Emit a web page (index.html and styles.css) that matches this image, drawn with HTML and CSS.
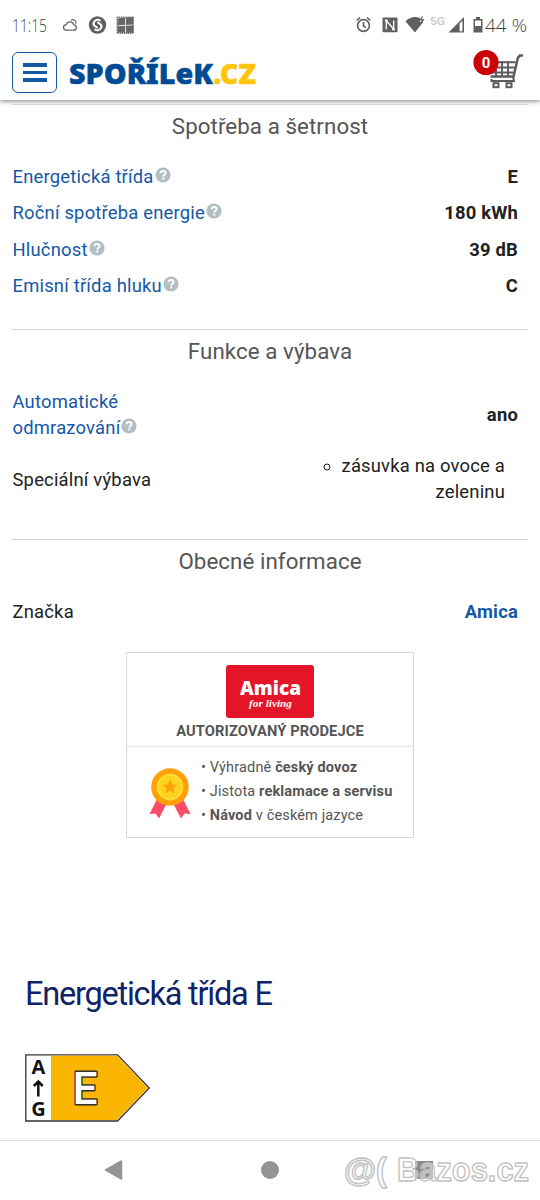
FILE: index.html
```
<!DOCTYPE html>
<html lang="cs">
<head>
<meta charset="utf-8">
<title>Spořílek.cz</title>
<link rel="stylesheet" href="styles.css">
</head>
<body>
<svg class="defs" width="0" height="0" aria-hidden="true">
  <symbol id="help" viewBox="0 0 16 16">
    <circle cx="8" cy="8" r="7.600" fill="#b3bec3"/>
    <path d="M5.500 6.300C5.600 4.700 6.700 4 8.100 4c1.500 0 2.500.8 2.500 2.100 0 1.800-2.300 1.700-2.300 3.300" fill="none" stroke="#fff" stroke-width="1.900"/>
    <rect x="7.200" y="10.500" width="2.100" height="2" fill="#fff"/>
  </symbol>
</svg>
<header class="top">
  <div class="status">
    <svg class="status-svg" width="540" height="48" viewBox="0 0 540 48">
      <text class="clock" x="12" y="32" textLength="35" lengthAdjust="spacingAndGlyphs">11:15</text>
      <g fill="none" stroke="#666" stroke-width="1.300">
        <path d="M66.500 30.200h7a2.700 2.700 0 0 0 .3-5.400a4 4 0 0 0-7.600-.2a2.800 2.800 0 0 0 .3 5.600z"/>
        <path d="M71 20.200a3.200 3.200 0 0 1 4.800 3.600"/>
      </g>
      <circle cx="97.500" cy="25" r="8.700" fill="#606060"/>
      <path d="M99.800 20.500c-2-1.700-4.300-.5-5.600 1.100c-1.200 1.600-.8 3.200.7 4.400l2.200 1.500M95.200 29.500c2 1.700 4.300.5 5.600-1.100c1.200-1.600.8-3.200-.7-4.400l-2.200-1.500" fill="none" stroke="#fff" stroke-width="1.900" stroke-linecap="round"/>
      <g fill="#686868">
        <path d="M118 18.500l7.200-1v7.300l-8 .7zM126 17.500l7.500-.5-.5 7.500-7 .5zM117.500 26.300l7.700-.5v7l-7.700-.5zM126 25.800l7.500-.5v7l-7.500 1z"/>
        <path d="M117 17.500h16M117.500 33h15.500M117.500 17v16M133 17v16" fill="none" stroke="#686868" stroke-width="2" stroke-dasharray="1.300 .8"/>
      </g>
      <g fill="none" stroke="#606060" stroke-width="1.600">
        <circle cx="363.500" cy="25.500" r="5.900"/>
        <path d="M363.500 22v4l2.500 1.700M356.700 20.500l3.300-2.900M370.300 20.500l-3.300-2.900"/>
      </g>
      <rect x="382.500" y="17.500" width="15" height="14.700" rx="1" fill="#606060"/>
      <path d="M386.300 29.500v-8.700l7.400 8.200v-8.500M384.800 20.500h3M392 29.500h3" fill="none" stroke="#fff" stroke-width="1.300"/>
      <path d="M405.500 21.300c5.500-5.400 13-5.300 17-1.600v3.400l-7.600 9.300z" fill="#606060"/>
      <path d="M420 18l1.500 1.500-1.500 2.500" stroke="#fff" fill="none"/>
      <path d="M422.500 16.500l-1.800 3h2.600l-2 3.500" stroke="#606060" fill="none" stroke-width="1.200"/>
      <text class="fiveg" x="430" y="25" textLength="15" lengthAdjust="spacingAndGlyphs">5G</text>
      <path d="M448.500 32.500l15.500-15.500v15.500z" fill="#606060"/>
      <path d="M459.600 23.500l2.800-2.800v10.500h-2.800z" fill="#fff"/>
      <path d="M473.500 19h2.500v-2h4v2h2.500v13.500h-9zM475 20.500v5.500h6v-5.500z" fill="#606060" fill-rule="evenodd"/>
      <text class="clock" x="485" y="32" textLength="42" lengthAdjust="spacingAndGlyphs">44 %</text>
    </svg>
  </div>
  <div class="bar">
    <button class="menu" aria-label="Menu"><span></span><span></span><span></span></button>
    <svg class="logo" width="192" height="40" viewBox="0 0 192 40">
      <text class="logo-text" x="0" y="32" textLength="187" lengthAdjust="spacingAndGlyphs">SPOŘÍLeK<tspan fill="#ffc40c">.CZ</tspan></text>
    </svg>
    <svg class="cart" width="54" height="44" viewBox="0 0 54 44">
      <g fill="none" stroke="#5c5c5c">
        <path d="M51 6.500h-3l-2 2-4.500 19H18.500" stroke-width="2.500"/>
        <path d="M18 13.200h25.500M18 18.500h24.500M18 23.500h23M24 12v15M30 12v15M36 12v15" stroke-width="1.900"/>
        <path d="M41 27.500l1 4.500H19.500v-2" stroke-width="2"/>
        <rect x="21.500" y="34.200" width="5" height="4" stroke-width="2"/>
        <rect x="34.500" y="34.200" width="5" height="4" stroke-width="2"/>
      </g>
      <circle cx="14" cy="13.500" r="12.600" fill="#cc0007"/>
      <text class="cart-count" x="14" y="18.500" text-anchor="middle">0</text>
    </svg>
  </div>
</header>

<main>
  <section class="group first">
    <h3>Spotřeba a šetrnost</h3>
    <div class="row"><a class="label">Energetická třída<svg class="help"><use href="#help"/></svg></a><b>E</b></div>
    <div class="row"><a class="label">Roční spotřeba energie<svg class="help"><use href="#help"/></svg></a><b>180 kWh</b></div>
    <div class="row"><a class="label">Hlučnost<svg class="help"><use href="#help"/></svg></a><b>39 dB</b></div>
    <div class="row"><a class="label">Emisní třída hluku<svg class="help"><use href="#help"/></svg></a><b>C</b></div>
  </section>
  <section class="group second">
    <h3>Funkce a výbava</h3>
    <div class="row"><a class="label">Automatické<br>odmrazování<svg class="help"><use href="#help"/></svg></a><b>ano</b></div>
    <div class="row extras"><span>Speciální výbava</span><ul><li>zásuvka na ovoce a<br>zeleninu</li></ul></div>
  </section>
  <section class="group third">
    <h3>Obecné informace</h3>
    <div class="row"><span>Značka</span><b class="brand">Amica</b></div>
  </section>

  <aside class="dealer">
    <div class="dealer-head">
      <svg width="88" height="53" viewBox="0 0 88 53">
        <rect width="88" height="53" rx="3" fill="#e41528"/>
        <text class="amica" x="14" y="29.500" textLength="61" lengthAdjust="spacingAndGlyphs">Amica</text>
        <text class="living" x="23" y="42" textLength="43" lengthAdjust="spacingAndGlyphs">for living</text>
      </svg>
      <strong>AUTORIZOVANÝ PRODEJCE</strong>
    </div>
    <div class="dealer-body">
      <svg width="42" height="52" viewBox="0 0 42 52">
        <path d="M8 32L.500 47l6-.5L10 51.500 17.500 37zM34 32l7.500 15-6-.5L32 51.500 24.500 37z" fill="#ff4d68"/>
        <circle cx="21" cy="20" r="18.800" fill="#ff9f0a"/>
        <circle cx="21" cy="20" r="13.400" fill="#ffd21c"/>
        <circle cx="21" cy="20" r="12" fill="none" stroke="#ffe145" stroke-width="1.200"/>
        <path d="M21 12.500l2.100 4.900 5.200.4-4 3.400 1.300 5.200-4.600-2.800-4.600 2.800 1.300-5.200-4-3.400 5.200-.4z" fill="#fda209"/>
      </svg>
      <div class="perks">
        <p>• Výhradně <b>český dovoz</b></p>
        <p>• Jistota <b>reklamace a servisu</b></p>
        <p>• <b>Návod</b> v českém jazyce</p>
      </div>
    </div>
  </aside>

  <h2>Energetická třída E</h2>
  <svg class="energy" width="126" height="69" viewBox="0 0 126 69">
    <path d="M.8.800H92.500L124.300 34 92.500 67H.8z" fill="#fff" stroke="#333" stroke-width="1.300"/>
    <path d="M26 1.800H92L123 34 92 66H26z" fill="#fab500"/>
    <text class="scale" x="13.500" y="20" text-anchor="middle">A</text>
    <path d="M13.300 42.500V29M8.800 32l4.500-4.500 4.500 4.500" fill="none" stroke="#111" stroke-width="2.500"/>
    <text class="scale" x="13.500" y="62" text-anchor="middle">G</text>
    <text class="grade" x="47.500" y="50" textLength="25" lengthAdjust="spacingAndGlyphs">E</text>
  </svg>
</main>

<footer class="nav">
  <svg width="540" height="59" viewBox="0 0 540 59">
    <path d="M105.500 29L121.500 20v18z" fill="#949494" stroke="#949494" stroke-width="1.500" stroke-linejoin="round"/>
    <circle cx="270" cy="29" r="9" fill="#949494"/>
    <rect x="415" y="20" width="18" height="18" fill="#8a8a8a"/>
    <text class="watermark" x="344" y="40" textLength="43" lengthAdjust="spacingAndGlyphs">@(</text>
    <text class="watermark" x="397" y="40" textLength="132" lengthAdjust="spacingAndGlyphs">Bazos.cz</text>
  </svg>
</footer>
</body>
</html>
```
FILE: styles.css
```
* { box-sizing: border-box; }
body {
  margin: 0;
  height: 1200px;
  display: flex;
  flex-direction: column;
  overflow: hidden;
  background: #fff;
  color: #212121;
  font: 18.400px/26.300px Roboto, sans-serif;
  letter-spacing: .2px;
}
svg { display: block; flex: none; }
svg text { letter-spacing: 0; }
.defs { display: none; }
.top {
  height: 100px;
  flex: none;
  box-shadow: 0 1px 5px rgba(0, 0, 0, .5);
}
.status { height: 48px; }
.clock { font: 300 19px "Open Sans", sans-serif; fill: #444; }
.fiveg { font: 500 11px Roboto, sans-serif; fill: #c4c4c4; }
.bar {
  display: flex;
  align-items: flex-start;
  padding: 4px 14px 0 12px;
}
.menu {
  width: 45px;
  height: 41px;
  padding: 0;
  display: flex;
  flex-direction: column;
  align-items: center;
  justify-content: center;
  gap: 4px;
  background: #fff;
  border: 1px solid #1558a6;
  border-radius: 6px;
}
.menu span { width: 24px; height: 3.500px; background: #1558a6; }
.logo { margin-left: 12px; }
.logo-text { font: 900 29px "Noto Sans", sans-serif; fill: #004b93; stroke: #004b93; stroke-width: .5px; }
.logo-text tspan { stroke: #ffc40c; }
.cart { margin-left: auto; margin-top: -3px; }
.cart-count { font: 700 15px Roboto, sans-serif; fill: #fff; }

main { flex: 1; padding: 4px 12px 0; }
.group { border-top: 1px solid #cfd8dc; }
.first { height: 225px; }
.second { height: 210px; }
.third { height: 113px; }
h3 {
  margin: 0;
  padding-top: 7.500px;
  height: 54px;
  font-size: 22.300px;
  font-weight: 400;
  letter-spacing: .08px;
  text-align: center;
  color: #555;
}
.row {
  display: flex;
  align-items: center;
  justify-content: space-between;
  padding: 5px 10px 5px .5px;
}
.extras { padding-top: 6px; }
.label, .brand { color: #1558a6; }
.row b { font-weight: 700; }
.help {
  display: inline-block;
  width: 16px;
  height: 16px;
  margin-left: 1px;
  vertical-align: 0;
}
.extras span { padding-top: 3px; }
ul { margin: 0 13px 0 0; padding: 0; list-style: circle; text-align: right; }
.dealer {
  width: 288px;
  height: 186px;
  margin: 0 auto 0 114px;
  border: 1px solid #d6d9db;
  color: #555;
}
.dealer-head {
  height: 94px;
  padding-top: 12px;
  display: flex;
  flex-direction: column;
  align-items: center;
  border-bottom: 1px dotted #cfd8dc;
}
.dealer-head strong { font-size: 14.700px; line-height: 26px; letter-spacing: .1px; }
.amica { font: 800 19px "Open Sans", sans-serif; fill: #fff; }
.living { font: italic 700 11px "Liberation Serif", serif; fill: #fff; }
.dealer-body { display: flex; padding: 9px 0 0 22px; }
.dealer-body svg { margin-top: 10.500px; }
.perks { margin-left: 10px; font-size: 14.500px; letter-spacing: .15px; }
.perks p { margin: 0; line-height: 23.800px; white-space: nowrap; }
h2 {
  margin: 135px 0 0 13px;
  font-size: 32.500px;
  line-height: 42px;
  font-weight: 400;
  letter-spacing: -1.220px;
  color: #0f2368;
}
.energy { margin: 39px 0 0 13px; }
.scale { font: 700 20px "Open Sans", sans-serif; fill: #111; }
.grade {
  font: 500 45px Roboto, sans-serif;
  fill: #fff;
  stroke: #333;
  stroke-width: 2.800px;
  stroke-linejoin: round;
  paint-order: stroke;
}
.nav { flex: none; height: 60px; border-top: 1px solid #ddd; background: #fff; }
.watermark {
  font: 700 33px "Liberation Sans", sans-serif;
  fill: #fff;
  fill-opacity: .45;
  stroke: #c2c2c2;
  stroke-width: 1.400px;
  stroke-linejoin: round;
}
```
